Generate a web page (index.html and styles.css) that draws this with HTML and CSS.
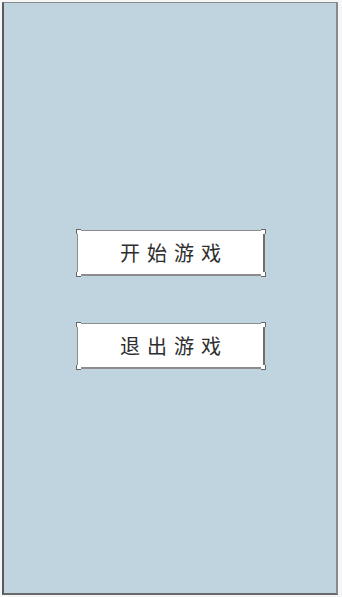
FILE: index.html
```html
<!DOCTYPE html>
<html lang="zh">
<head>
<meta charset="utf-8">
<link rel="stylesheet" href="styles.css">
</head>
<body>
<div class="frame">
  <div class="menu">
    <button class="btn"><span class="c tl"></span><span class="c tr"></span><span class="c bl"></span><span class="c br"></span>开始游戏</button>
    <button class="btn"><span class="c tl"></span><span class="c tr"></span><span class="c bl"></span><span class="c br"></span>退出游戏</button>
  </div>
</div>
</body>
</html>
```

FILE: styles.css
```css
html, body {
  margin: 0;
  padding: 0;
  background: #f4f6f7;
}
body {
  width: 342px;
  height: 597px;
  overflow: hidden;
  font-family: "Noto Sans CJK SC", "Noto Sans", sans-serif;
}
.frame {
  box-sizing: border-box;
  margin: 2px 4px 0 2px;
  height: 593px;
  background: #c0d4df;
  border-top: 1px solid #8a8a8a;
  border-left: 2px solid #5a5a5a;
  border-right: 2px solid #8a8a8a;
  border-bottom: 2px solid #6a6a6a;
}
.menu {
  display: flex;
  flex-direction: column;
  align-items: center;
  gap: 47px;
  padding-top: 227px;
}
.btn {
  position: relative;
  box-sizing: border-box;
  width: 188px;
  height: 46px;
  margin-left: 2px;
  background: #ffffff;
  border: 1px solid #8c8c8c;
  border-right: 2px solid #6e6e6e;
  border-bottom: 2px solid #8c8c8c;
  padding: 0 0 0 7px;
  font-family: "Noto Sans CJK SC", "Noto Sans", sans-serif;
  font-size: 20px;
  font-weight: 400;
  letter-spacing: 7px;
  color: #2e2e2e;
  display: flex;
  align-items: center;
  justify-content: center;
}
.c {
  position: absolute;
  width: 4px;
  height: 4px;
  border: 1px solid #666;
  background: #fff;
}
.tl { left: -2px; top: -2px; border-right: none; border-bottom: none; }
.tr { right: -3px; top: -2px; border-left: none; border-bottom: none; }
.bl { left: -2px; bottom: -3px; border-right: none; border-top: none; }
.br { right: -3px; bottom: -3px; border-left: none; border-top: none; }
```
